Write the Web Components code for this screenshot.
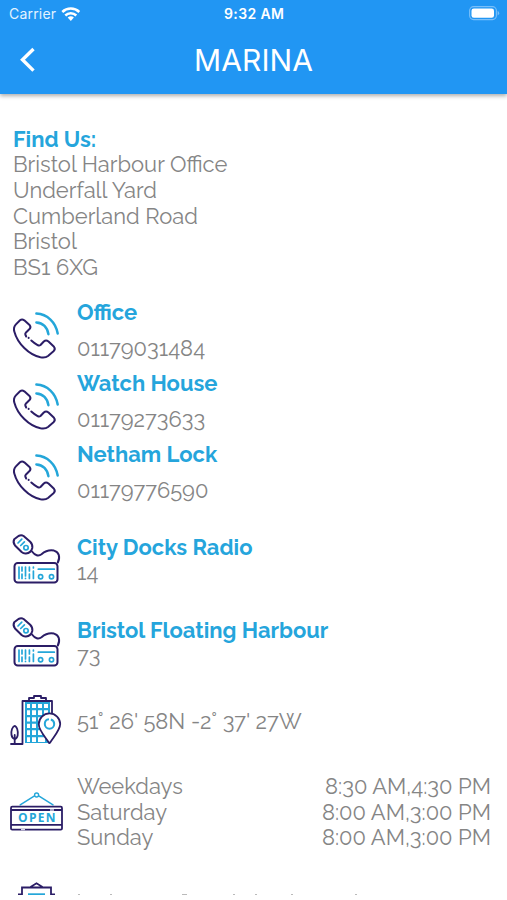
<!DOCTYPE html>
<html lang="en">
<head>
<meta charset="utf-8">
<title>Marina</title>
<style>
html,body{margin:0;background:#fff}
body{width:507px;height:900px;overflow:hidden;font-family:Raleway,Lato,"Open Sans",sans-serif}
</style>
</head>
<body>
<marina-app></marina-app>
<script>
const define = (name, html, setup) => customElements.define(name, class extends HTMLElement {
  connectedCallback() {
    if (this.shadowRoot) return;
    const root = this.attachShadow({mode: 'open'});
    root.innerHTML = html;
    if (setup) setup(this, root);
  }
});

// A single line of text; with "w" its tracking is adjusted so that it spans that width.
define('fit-text', `<style>
:host{display:block;box-sizing:border-box;padding-top:1px;white-space:nowrap;height:25.67px;line-height:25.67px;font-size:21.95px;color:#858585}
:host([strong]){color:#25a5dc;font-weight:700}
span{display:inline-block}
</style><span></span>`, (el, root) => {
  const span = root.querySelector('span'), text = el.getAttribute('text'), w = +el.getAttribute('w');
  span.textContent = text;
  if (!w) return;
  const gap = (w - span.getBoundingClientRect().width) / (text.length - 1);
  span.style.letterSpacing = gap.toFixed(3) + 'px';
  span.style.marginRight = (-gap).toFixed(3) + 'px';
});

const icons = {
phone: `<g fill="none" stroke-linecap="round" stroke-linejoin="round"><g stroke="#2b1d66" stroke-width="2"><path d="M26.2 36.5L25.3 34.5Q25 33.5 26 32.5L29.5 29Q31.2 27 29.8 25.3L24.3 20.3Q22 18.8 20 20.3L15.7 24.6Q13.2 27.3 14.3 31.5C17.5 43.5 29 55 40.5 57.2Q45.5 58 48 56L53.5 51.3Q55.8 49 54 46.8L48.5 41.5Q46 39.5 43.8 41.5L40.5 45Q39.4 45.8 38 45.3Q34.2 43.2 31.3 40.5"/><path d="M28.6 37.8v.1"/></g><g stroke="#24a6d9" stroke-width="2.5"><path d="M36.4 13.6C47.5 14.3 55.7 22.2 57.7 33.5M36.4 22.4C42.9 22.7 47.5 27.5 48.4 34.2"/></g></g>`,
radio: `<g fill="none" stroke="#2b1d66" stroke-width="2" stroke-linecap="round" stroke-linejoin="round"><path d="M14.2 14.2L18.5 11Q21.3 9.7 23.6 11L30.2 16.8Q32.8 19.5 32.3 23Q31 28 26 28.5Q23.6 28.8 21.6 27L15 20.5Q12.6 17.5 14.2 14.2Z"/><path d="M32 26.5C35 30.5 38.5 31.5 41.5 29.2C46 25.5 49 24.6 54 25.6C59 27 60.5 32 57.8 37.5"/><rect x="14.5" y="38" width="43" height="19.5" rx="3.3"/></g><g fill="none" stroke="#24a6d9" stroke-width="1.7" stroke-linecap="round"><path d="M18 18L21.8 14.2M20.7 20.5L24.4 16.8M19 42V53.5M22 42V46M22 49V53.5M25.5 42V51M25.5 53.3V53.5M29.4 42V46M29.4 49V53.5M33.4 42V43M33.4 46V53.5M38.3 44.2H54.3"/><circle cx="26" cy="22.7" r="2.2"/><circle cx="40.6" cy="51.7" r="2.1"/><circle cx="51.5" cy="51.7" r="2.1"/></g>`,
building: `<g fill="#24a6d9"><path d="M25 16H50V57H25Z"/></g><g fill="#fff"><path d="M27 18H30V22H27ZM32 18H36V22H32ZM38 18H42V22H38ZM44 18H48V22H44Z"/><path d="M27 24.3H30V29H27ZM32 24.3H36V29H32ZM38 24.3H42V29H38ZM44 24.3H48V29H44Z"/><path d="M27 31.2H30V35.5H27ZM32 31.2H36V35.5H32ZM38 31.2H42V35.5H38Z"/><path d="M27 37.8H30V42H27ZM32 37.8H36V42H32ZM38 37.8H42V42H38Z"/><path d="M27 44.3H30V49H27ZM32 44.3H36V49H32ZM38 44.3H42V49H38Z"/><path d="M27 51.2H30V56H27ZM32 51.2H36V56H32ZM38 51.2H45V56H38Z"/></g><g fill="none" stroke="#2b1d66" stroke-width="1.8" stroke-linecap="round" stroke-linejoin="round"><path d="M22.5 58V15H52V28M29 14.5V12H34V10H41V12H46V14.5M11 58H22.5M14.7 58V49"/><path d="M14.7 53C10.7 52 11 46 12 43Q14.7 37 17.2 43C18.5 47 18 52.5 14.7 53Z"/><path fill="#fff" d="M49 56.8C45 50.5 38.6 44 38.8 38.1A10.7 10.7 0 0 1 60.2 38.1C60.2 44 54 50.5 50 56.8Q49.4 57.6 49 56.8Z"/></g><circle cx="49.5" cy="38" r="4.7" fill="none" stroke="#24a6d9" stroke-width="2" stroke-dasharray="21 2"/>`,
open: `<path d="M20.2 24.8L34.5 15.8M38.7 15.8L53 24.8" fill="none" stroke="#24a6d9" stroke-width="1.5" stroke-linecap="round"/><circle cx="36.6" cy="15" r="2" fill="#fff" stroke="#24a6d9" stroke-width="1.4"/><g fill="none" stroke="#2b1d66" stroke-width="1.8"><rect x="11" y="26.7" width="51" height="23" rx="1.2"/><path d="M11 30H62M11 44.8H62"/></g><path d="M50 30H54M21 49.5H25" stroke="#d6d5e8" stroke-width="1.6"/><text x="18.1" y="42.4" textLength="37.4" font-family="Open Sans,sans-serif" font-weight="700" font-size="12" fill="#24a6d9">OPEN</text>`
};
define('line-icon', `<style>:host{display:block;width:70px;height:70px;flex:none}svg{display:block}</style>
<svg width="70" height="70" viewBox="0 0 70 70"></svg>`, (el, root) => {
  root.querySelector('svg').innerHTML = icons[el.getAttribute('name')];
});

define('info-row', `<style>
:host{display:flex;align-items:flex-start}
.body{margin-left:7px;flex:1;padding-right:16px}
</style><slot name="icon"></slot><div class="body"><slot></slot></div>`);

define('status-bar', `<style>
:host{display:grid;grid-template-columns:1fr auto 1fr;align-items:center;height:27px;padding:0 7px 0 9px;color:#fff}
fit-text{font:400 14px/27px Inter,sans-serif;height:27px;padding:0;color:#e3f3ff}
fit-text.t{font-weight:600;color:#fff;margin-right:1px}
.l{display:flex;align-items:center;gap:5px}
.b{justify-self:end}svg{display:block}
</style>
<div class="l"><fit-text text="Carrier" w="47"></fit-text><svg width="20" height="16" viewBox="0 0 20 16"><g fill="none" stroke="#fff" stroke-width="2.5"><path d="M1.3 6A12.3 12.3 0 0 1 18.3 6M4.3 9.5A8 8 0 0 1 15.3 9.5"/></g><path d="M6.7 11.6Q9.8 9 12.9 11.6L9.8 14.9Z" fill="#fff"/></svg></div>
<fit-text class="t" text="9:32 AM" w="60"></fit-text>
<svg class="b" width="31" height="15" viewBox="0 0 31 15"><rect x=".6" y=".6" width="26.8" height="13" rx="4" fill="none" stroke="#79bff9" stroke-width="1.1"/><rect x="2.5" y="2.5" width="22.5" height="9.2" rx="2.3" fill="#fff"/><path d="M28.6 5V9.4Q30.2 8.8 30.2 7.2T28.6 5Z" fill="#79bff9"/></svg>`);

define('app-header', `<style>
:host{display:block;position:relative;height:94px;background:#2196f3;box-shadow:0 2px 4px rgba(0,0,0,.32)}
.nav{display:grid;grid-template-columns:1fr auto 1fr;align-items:center;height:66px}
fit-text{font:400 30px/66px Inter,sans-serif;height:66px;padding:0;color:#fff}
svg{display:block;margin-left:18px}
</style><status-bar></status-bar><div class="nav"><svg width="20" height="28" viewBox="0 0 20 28"><path d="M15.5 3L4.5 13.8L15.5 24.6" fill="none" stroke="#fff" stroke-width="3.4"/></svg><fit-text text="MARINA" w="119"></fit-text><span></span></div>`);

const phone = (name, num) => `<info-row class="phone"><line-icon slot="icon" name="phone"></line-icon><fit-text strong text="${name}"></fit-text><fit-text class="num" text="${num}"></fit-text></info-row>`;
const radio = (name, num) => `<info-row class="radio"><line-icon slot="icon" name="radio"></line-icon><fit-text strong text="${name}"></fit-text><fit-text text="${num}"></fit-text></info-row>`;
const hours = (day, time) => `<div class="hours"><fit-text text="${day}"></fit-text><fit-text text="${time}"></fit-text></div>`;

define('marina-app', `<style>
:host{display:flex;flex-direction:column;width:507px;height:900px;background:#fff}
main{height:801px;overflow:hidden}
.address{padding:31.6px 0 0 13px;height:153.4px}
.phones{padding-top:20px;height:213px}
.phone{height:71px}
.phone line-icon{margin-top:1px}
.num{margin-top:10px}
.radios{padding-top:21.6px;height:153.1px}
.radio{height:83px}
.radio line-icon{margin-top:-8.2px}
.place{height:79px}
.place line-icon{margin-top:-.7px}
.place fit-text{margin-top:21.5px}
.opening{height:106.5px;padding-top:7.5px}
.opening line-icon{margin-top:7.3px}
.hours{display:flex;justify-content:space-between}
.next{display:block}
</style>
<app-header></app-header>
<main>
<section class="address">
<fit-text strong text="Find Us:"></fit-text>
<fit-text text="Bristol Harbour Office"></fit-text>
<fit-text text="Underfall Yard"></fit-text>
<fit-text text="Cumberland Road"></fit-text>
<fit-text text="Bristol"></fit-text>
<fit-text text="BS1 6XG"></fit-text>
</section>
<section class="phones">${phone('Office', '01179031484')}${phone('Watch House', '01179273633')}${phone('Netham Lock', '01179776590')}</section>
<section class="radios">${radio('City Docks Radio', '14')}${radio('Bristol Floating Harbour', '73')}</section>
<info-row class="place"><line-icon slot="icon" name="building"></line-icon><fit-text text="51° 26' 58N -2° 37' 27W"></fit-text></info-row>
<info-row class="opening"><line-icon slot="icon" name="open"></line-icon>${hours('Weekdays', '8:30 AM,4:30 PM')}${hours('Saturday', '8:00 AM,3:00 PM')}${hours('Sunday', '8:00 AM,3:00 PM')}</info-row>
<svg class="next" width="400" height="30" viewBox="0 0 400 30"><g fill="none" stroke="#2b1d66" stroke-width="1.8"><path d="M18 14.5H22V7.5H51V14.5H55M30.5 7L36.5 3.3L42.5 7"/></g><path d="M28 14.3H45" stroke="#24a6d9" stroke-width="2"/><path d="M78 14.7H80M110 14.7H112M182 14.7H187M233 14.7H235M255 14.7H257M291 14.7H293M355 14.7H357" stroke="#aaa"/></svg>
</main>`);
</script>
</body>
</html>
